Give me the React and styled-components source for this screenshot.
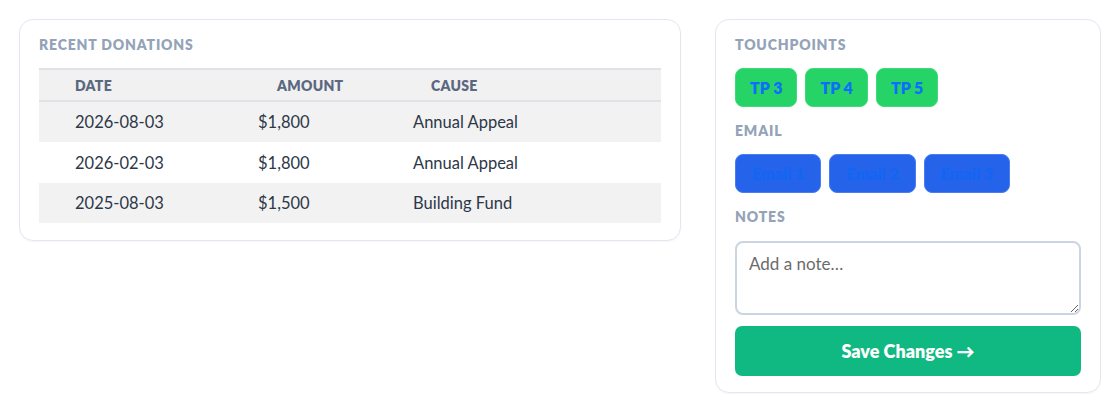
import React from "react";
import styled, { createGlobalStyle } from "styled-components";

const GlobalStyle = createGlobalStyle`
  body {
    margin: 0;
    background: #ffffff;
    font-family: Lato, "Open Sans", sans-serif;
  }
`;

const Page = styled.div`
  display: grid;
  grid-template-columns: 1fr 386px;
  gap: 34px;
  align-items: start;
  padding: 19px;
`;

const Card = styled.section`
  border: 1px solid #e2e8f0;
  border-radius: 14px;
  background: #fff;
  padding: 15px 19px ${props => props.$bottom || 17}px;
  box-shadow: 0 1px 2px rgba(15, 23, 42, 0.04);
`;

const Heading = styled.h3`
  margin: 0 0 ${props => props.$gap || 13}px;
  font-size: 14px;
  line-height: 20px;
  font-weight: 800;
  letter-spacing: 0.06em;
  text-transform: uppercase;
  color: #94a3b8;
`;

const Table = styled.table`
  width: 100%;
  border-collapse: collapse;
  table-layout: fixed;
`;

const HeadRow = styled.tr`
  background: #f1f1f1;
  border-top: 2px solid #dfe3e8;
  border-bottom: 2px solid #dfe3e8;
`;

const Th = styled.th`
  height: 30px;
  padding: 0 0 0 ${props => props.$pad}px;
  text-align: left;
  font-size: 14px;
  font-weight: 800;
  letter-spacing: 0.02em;
  color: #5b6880;
  text-transform: uppercase;
`;

const Row = styled.tr`
  background: ${props => (props.$striped ? "#f2f2f2" : "#ffffff")};
`;

const Td = styled.td`
  height: ${props => props.$h || 40}px;
  padding: 0 0 0 36px;
  font-size: 16.5px;
  color: #2d3748;
`;

const ChipRow = styled.div`
  display: flex;
  gap: 8px;
  margin-bottom: 14px;
`;

const Chip = styled.button`
  box-sizing: border-box;
  height: 39px;
  padding: 0 ${props => props.$pad}px;
  border-radius: 8px;
  border: 1px solid ${props => props.$edge};
  background: ${props => props.$bg};
  color: ${props => props.$fg};
  font-family: inherit;
  font-size: 16px;
  font-weight: 800;
  cursor: pointer;
`;

const Notes = styled.textarea`
  display: block;
  box-sizing: border-box;
  width: 100%;
  height: 74px;
  margin: 0 0 11px;
  padding: 10px 12px;
  border: 2px solid #cbd5e1;
  border-radius: 8px;
  font-family: inherit;
  font-size: 17px;
  color: #334155;
  resize: vertical;
  &::placeholder {
    color: #6b6b6b;
  }
`;

const SaveButton = styled.button`
  display: block;
  width: 100%;
  height: 50px;
  border: none;
  border-radius: 7px;
  background: #10b981;
  color: #fff;
  font-family: inherit;
  font-size: 18px;
  font-weight: 800;
  cursor: pointer;
`;

const donations = [
  { date: "2026-08-03", amount: "$1,800", cause: "Annual Appeal", h: 40 },
  { date: "2026-02-03", amount: "$1,800", cause: "Annual Appeal", h: 41 },
  { date: "2025-08-03", amount: "$1,500", cause: "Building Fund", h: 40 }
];

const App = () => (
  <>
    <GlobalStyle />
    <Page>
      <Card $bottom={17}>
        <Heading>Recent Donations</Heading>
        <Table>
          <colgroup>
            <col style={{ width: 183 }} />
            <col style={{ width: 155 }} />
            <col />
          </colgroup>
          <thead>
            <HeadRow>
              <Th $pad={36}>Date</Th>
              <Th $pad={55}>Amount</Th>
              <Th $pad={54}>Cause</Th>
            </HeadRow>
          </thead>
          <tbody>
            {donations.map((d, i) => (
              <Row key={d.date} $striped={i % 2 === 0}>
                <Td $h={d.h}>{d.date}</Td>
                <Td $h={d.h}>{d.amount}</Td>
                <Td $h={d.h}>{d.cause}</Td>
              </Row>
            ))}
          </tbody>
        </Table>
      </Card>

      <Card $bottom={16}>
        <Heading>Touchpoints</Heading>
        <ChipRow>
          {["TP 3", "TP 4", "TP 5"].map(t => (
            <Chip key={t} $pad={14} $bg="#25d366" $edge="#3ddb7a" $fg="#0d6efd">
              {t}
            </Chip>
          ))}
        </ChipRow>
        <Heading>Email</Heading>
        <ChipRow>
          {["Email 1", "Email 2", "Email 3"].map(t => (
            <Chip key={t} $pad={16} $bg="#2563eb" $edge="#4a7ef0" $fg="#1366f2">
              {t}
            </Chip>
          ))}
        </ChipRow>
        <Heading $gap={14}>Notes</Heading>
        <Notes placeholder="Add a note…" />
        <SaveButton>Save Changes →</SaveButton>
      </Card>
    </Page>
  </>
);

export default App;
